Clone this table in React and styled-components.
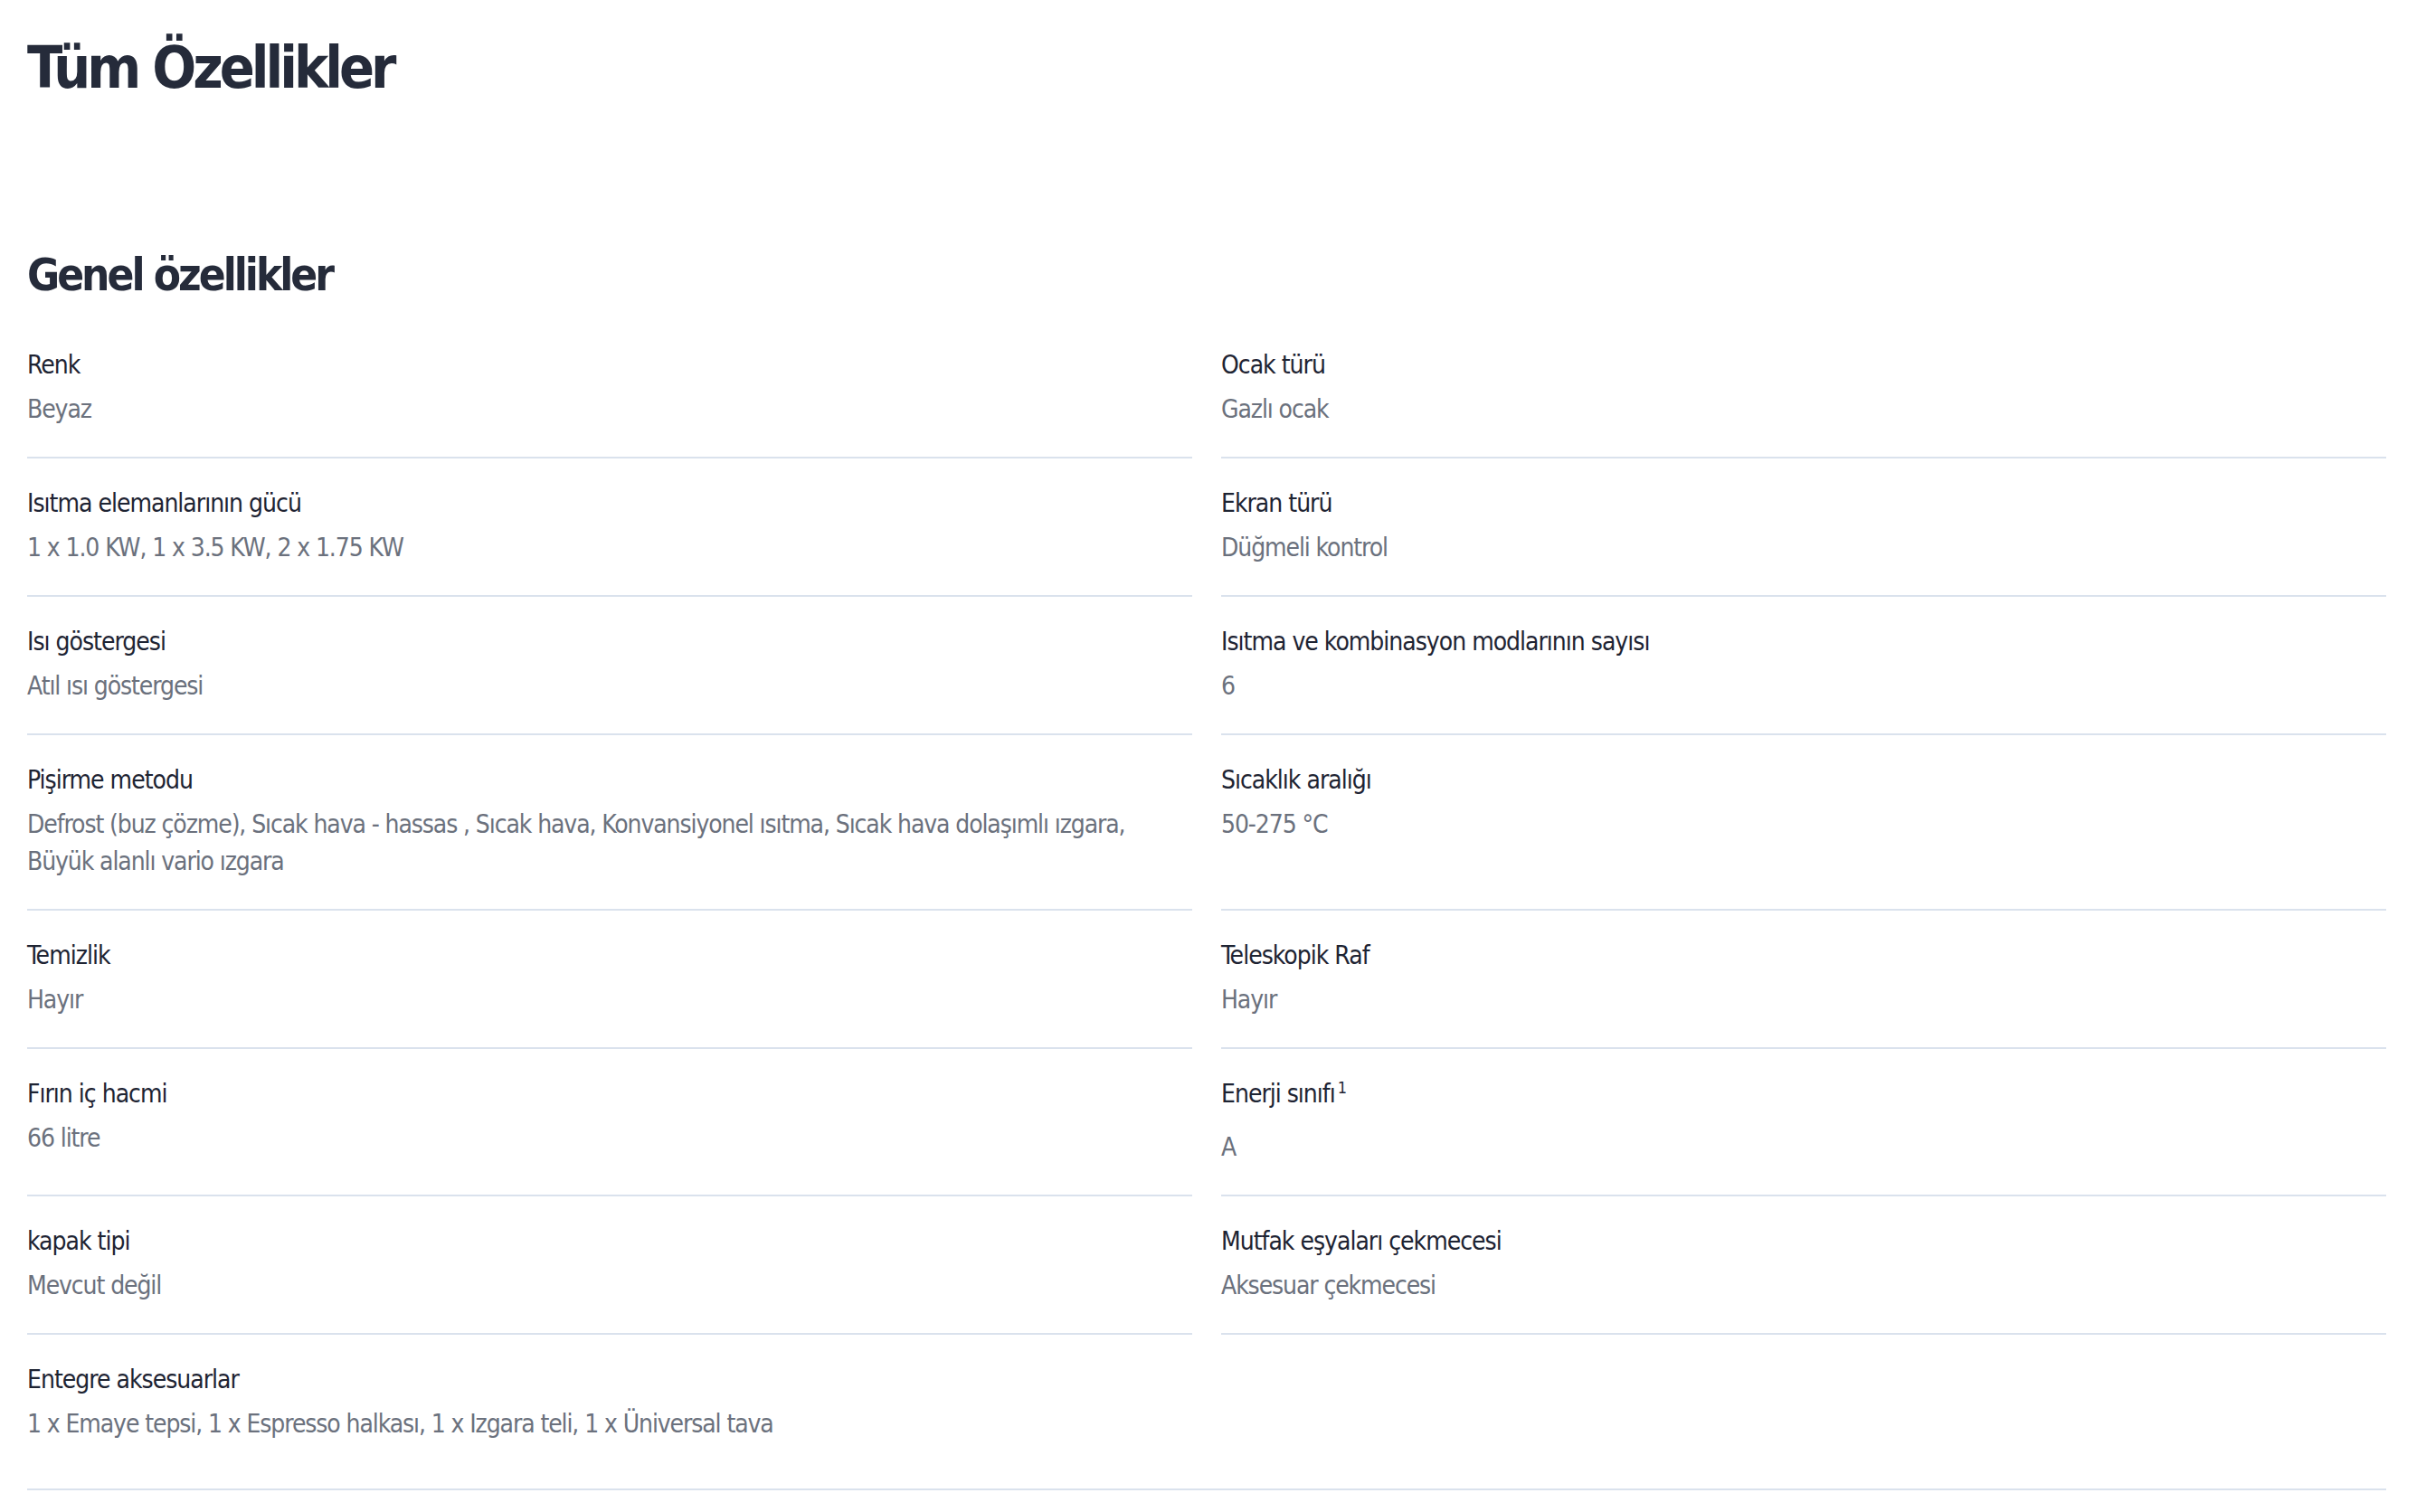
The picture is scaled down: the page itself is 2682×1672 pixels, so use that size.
import React from "react";
import styled, { createGlobalStyle } from "styled-components";

const specs = [
  { label: "Renk", value: "Beyaz" },
  { label: "Ocak türü", value: "Gazlı ocak" },
  { label: "Isıtma elemanlarının gücü", value: "1 x 1.0 KW, 1 x 3.5 KW, 2 x 1.75 KW" },
  { label: "Ekran türü", value: "Düğmeli kontrol" },
  { label: "Isı göstergesi", value: "Atıl ısı göstergesi" },
  { label: "Isıtma ve kombinasyon modlarının sayısı", value: "6" },
  {
    label: "Pişirme metodu",
    value:
      "Defrost (buz çözme), Sıcak hava - hassas , Sıcak hava, Konvansiyonel ısıtma, Sıcak hava dolaşımlı ızgara, Büyük alanlı vario ızgara",
  },
  { label: "Sıcaklık aralığı", value: "50-275 °C" },
  { label: "Temizlik", value: "Hayır" },
  { label: "Teleskopik Raf", value: "Hayır" },
  { label: "Fırın iç hacmi", value: "66 litre" },
  { label: "Enerji sınıfı", note: "1", value: "A" },
  { label: "kapak tipi", value: "Mevcut değil" },
  { label: "Mutfak eşyaları çekmecesi", value: "Aksesuar çekmecesi" },
  {
    label: "Entegre aksesuarlar",
    value: "1 x Emaye tepsi, 1 x Espresso halkası, 1 x Izgara teli, 1 x Üniversal tava",
    wide: true,
  },
];

const App = () => {
  return (
    <>
      <GlobalStyle />
      <Page>
        <Title>Tüm Özellikler</Title>
        <SectionTitle>Genel özellikler</SectionTitle>
        <SpecGrid>
          {specs.map((s) => (
            <SpecItem key={s.label} $wide={s.wide}>
              <Label $note={!!s.note}>
                {s.label}
                {s.note && <sup>{s.note}</sup>}
              </Label>
              <Value>{s.value}</Value>
            </SpecItem>
          ))}
        </SpecGrid>
      </Page>
    </>
  );
};

const GlobalStyle = createGlobalStyle`
  body {
    margin: 0;
    background: #ffffff;
    font-family: "DejaVu Sans Condensed", "Liberation Sans Narrow", "Liberation Sans", sans-serif;
    font-stretch: condensed;
  }
`;

const Page = styled.main`
  padding: 35px 44px 0 30px;
`;

const Title = styled.h1`
  margin: 0;
  font-size: 64px;
  line-height: 80px;
  font-weight: 700;
  letter-spacing: -4px;
  color: #252b3a;
`;

const SectionTitle = styled.h2`
  margin: 158px 0 17px;
  font-size: 49px;
  line-height: 64px;
  font-weight: 700;
  letter-spacing: -3px;
  color: #252b3a;
`;

const SpecGrid = styled.div`
  display: grid;
  grid-template-columns: 1fr 1fr;
  column-gap: 32px;
`;

const SpecItem = styled.div`
  grid-column: ${(p) => (p.$wide ? "1 / -1" : "auto")};
  padding: 30px 0 ${(p) => (p.$wide ? "51px" : "32px")};
  border-bottom: 2px solid #dae2ed;
`;

const Label = styled.div`
  font-size: 28px;
  line-height: 40px;
  letter-spacing: -1px;
  color: #1e2433;
  margin-bottom: ${(p) => (p.$note ? "18px" : "8px")};

  sup {
    font-size: 18px;
    line-height: 0;
    margin-left: 3px;
    vertical-align: 10px;
  }
`;

const Value = styled.div`
  font-size: 28px;
  line-height: 41px;
  letter-spacing: -1.1px;
  color: #6b717d;
`;

export default App;
